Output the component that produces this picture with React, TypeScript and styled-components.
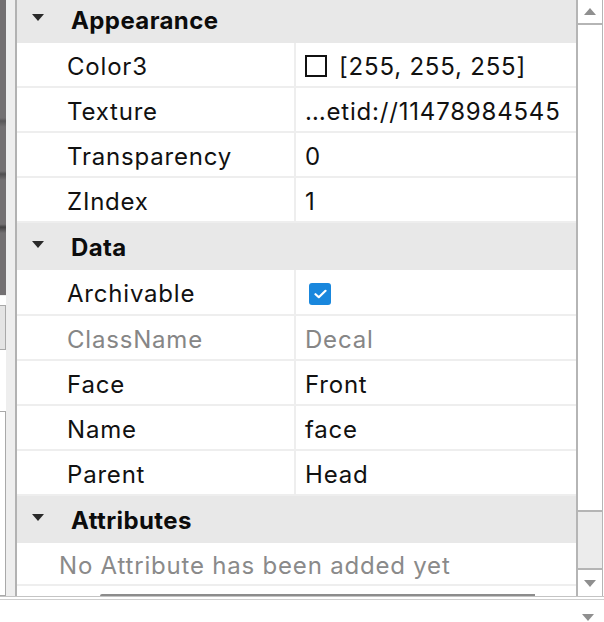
import React from 'react'
import styled, { createGlobalStyle } from 'styled-components'

const GlobalStyle = createGlobalStyle`
  html, body {
    margin: 0;
    padding: 0;
    background: #ffffff;
  }
  body {
    font-family: Inter, "Liberation Sans", "Noto Sans", sans-serif;
    color: #111111;
  }
`

const Screen = styled.div`
  width: 604px;
  height: 622px;
  display: flex;
  flex-direction: column;
  overflow: hidden;
  background: #ffffff;
`

const Main = styled.div`
  height: 596px;
  display: flex;
  flex-direction: row;
`

const DockStrip = styled.div`
  width: 15px;
  display: flex;
  flex-direction: row;
  background: #eeeeee;
  border-right: 2px solid #b2b2b2;
`

const DockColumn = styled.div`
  width: 6px;
  display: flex;
  flex-direction: column;
  background: #ffffff;
`

const Viewport = styled.div`
  height: 295px;
  background:
    linear-gradient(180deg, transparent 0 40%, rgba(40, 40, 40, 0.35) 41%, transparent 43% 58%, rgba(30, 30, 30, 0.4) 59%, transparent 61% 76%, rgba(20, 20, 20, 0.5) 77%, transparent 79%),
    #737072;
  border-bottom: 1px solid #eeeeee;
`

const DockBox = styled.div<{ $height: number; $fill?: boolean }>`
  height: ${p => p.$height}px;
  box-sizing: border-box;
  background: ${p => (p.$fill ? '#e4e4e4' : '#ffffff')};
  border: 1px solid #a9a9a9;
  border-left: none;
`

const DockGap = styled.div<{ $height: number }>`
  height: ${p => p.$height}px;
  background: #ffffff;
`

const Panel = styled.div`
  flex: 1;
  display: flex;
  flex-direction: row;
  min-width: 0;
`

const Content = styled.div`
  flex: 1;
  display: flex;
  flex-direction: column;
  overflow: hidden;
  min-width: 0;
`

const List = styled.div`
  flex: 1;
  margin-top: -4px;
  letter-spacing: 0.8px;
`

const SectionHeader = styled.div`
  height: 47px;
  box-sizing: border-box;
  padding: 2px 0 0 15px;
  display: flex;
  align-items: center;
  background: #e8e8e8;
  font-size: 24px;
  font-weight: 700;
  letter-spacing: 0.4px;
  color: #0c0c0c;
`

const Caret = styled.span`
  width: 0;
  height: 0;
  border-left: 6px solid transparent;
  border-right: 6px solid transparent;
  border-top: 7px solid #2a2a2a;
  margin-right: 27px;
  margin-bottom: 7px;
`

const Row = styled.div<{ $tall?: boolean }>`
  height: ${p => (p.$tall ? 44 : 43)}px;
  display: grid;
  grid-template-columns: 279px 1fr;
  border-bottom: 2px solid #eeeeee;
  font-size: 24px;
`

const NameCell = styled.div<{ $muted?: boolean }>`
  display: flex;
  align-items: center;
  padding: 3px 0 0 50px;
  border-right: 2px solid #eeeeee;
  color: ${p => (p.$muted ? '#868686' : '#111111')};
  white-space: nowrap;
`

const ValueCell = styled.div<{ $muted?: boolean }>`
  display: flex;
  align-items: center;
  padding: 3px 0 0 9px;
  color: ${p => (p.$muted ? '#868686' : '#111111')};
  white-space: nowrap;
  overflow: hidden;
`

const Swatch = styled.span`
  width: 22px;
  height: 22px;
  box-sizing: border-box;
  border: 2px solid #111111;
  background: #ffffff;
  margin-right: 12px;
`

const CheckBox = styled.span`
  width: 22px;
  height: 22px;
  margin-left: 4px;
  border-radius: 3px;
  background: #1987dd;
  display: flex;
  align-items: center;
  justify-content: center;
`

const EmptyRow = styled.div`
  height: 43px;
  box-sizing: border-box;
  padding: 3px 0 0 42px;
  display: flex;
  align-items: center;
  font-size: 24px;
  color: #8a8a8a;
  border-bottom: 2px solid #eeeeee;
`

const HScroll = styled.div`
  height: 9px;
  display: flex;
  align-items: flex-end;
  padding-left: 83px;
  padding-right: 41px;
`

const HThumb = styled.div`
  flex: 1;
  height: 2px;
  border-radius: 2px 0 0 0;
  background: #8c8c8c;
`

const ScrollBar = styled.div`
  width: 24px;
  display: flex;
  flex-direction: column;
  border-left: 2px solid #b5b5b5;
  border-right: 1px solid #b5b5b5;
  margin-right: 1px;
`

const ArrowBox = styled.div<{ $height: number }>`
  height: ${p => p.$height}px;
  display: flex;
  align-items: center;
  justify-content: center;
  background: #ffffff;
`

const Arrow = styled.span<{ $up?: boolean }>`
  width: 0;
  height: 0;
  border-left: 6px solid transparent;
  border-right: 6px solid transparent;
  ${p => (p.$up ? 'border-bottom: 7px solid #8f8f8f;' : 'border-top: 7px solid #8f8f8f;')}
`

const Track = styled.div`
  flex: 1;
  background: #ffffff;
  border-top: 2px solid #b5b5b5;
`

const Thumb = styled.div`
  height: 56px;
  background: #ececec;
  border-top: 2px solid #b5b5b5;
  border-bottom: 2px solid #b5b5b5;
`

const Footer = styled.div`
  flex: 1;
  display: flex;
  flex-direction: column;
  border-top: 1px solid #c4c4c4;
`

const FooterLine = styled.div`
  margin-top: 2px;
  height: 1px;
  background: #cfcfcf;
`

const FooterBody = styled.div`
  flex: 1;
  display: flex;
  justify-content: flex-end;
  align-items: flex-end;
  padding: 0 10px 1px 0;
`

type Prop = {
  name: string
  value?: string
  kind?: 'color' | 'check'
  muted?: boolean
}

type Section = {
  title: string
  rows: Prop[]
  empty?: string
}

const sections: Section[] = [
  {
    title: 'Appearance',
    rows: [
      { name: 'Color3', value: '[255, 255, 255]', kind: 'color' },
      { name: 'Texture', value: '…etid://11478984545' },
      { name: 'Transparency', value: '0' },
      { name: 'ZIndex', value: '1' },
    ],
  },
  {
    title: 'Data',
    rows: [
      { name: 'Archivable', kind: 'check' },
      { name: 'ClassName', value: 'Decal', muted: true },
      { name: 'Face', value: 'Front' },
      { name: 'Name', value: 'face' },
      { name: 'Parent', value: 'Head' },
    ],
  },
  {
    title: 'Attributes',
    rows: [],
    empty: 'No Attribute has been added yet',
  },
]

const PropertyRow: React.FC<{ prop: Prop }> = ({ prop }) => (
  <Row $tall={prop.kind === 'check'}>
    <NameCell $muted={prop.muted}>{prop.name}</NameCell>
    <ValueCell $muted={prop.muted}>
      {prop.kind === 'color' && <Swatch />}
      {prop.kind === 'check' ? (
        <CheckBox>
          <svg width="13" height="10" viewBox="0 0 13 10">
            <path d="M1.5 5.2 L4.8 8.2 L11.5 1.8" fill="none" stroke="#ffffff" strokeWidth="2.2" strokeLinecap="round" strokeLinejoin="round" />
          </svg>
        </CheckBox>
      ) : (
        prop.value
      )}
    </ValueCell>
  </Row>
)

export default function App() {
  return (
    <Screen>
      <GlobalStyle />
      <Main>
        <DockStrip>
          <DockColumn>
            <Viewport />
            <DockGap $height={10} />
            <DockBox $height={45} $fill />
            <DockGap $height={61} />
            <DockBox $height={185} />
          </DockColumn>
        </DockStrip>
        <Panel>
          <Content>
            <List>
              {sections.map(section => (
                <React.Fragment key={section.title}>
                  <SectionHeader>
                    <Caret />
                    {section.title}
                  </SectionHeader>
                  {section.rows.map(prop => (
                    <PropertyRow key={prop.name} prop={prop} />
                  ))}
                  {section.empty && <EmptyRow>{section.empty}</EmptyRow>}
                </React.Fragment>
              ))}
            </List>
            <HScroll>
              <HThumb />
            </HScroll>
          </Content>
          <ScrollBar>
            <ArrowBox $height={23}>
              <Arrow $up />
            </ArrowBox>
            <Track />
            <Thumb />
            <ArrowBox $height={26}>
              <Arrow />
            </ArrowBox>
          </ScrollBar>
        </Panel>
      </Main>
      <Footer>
        <FooterLine />
        <FooterBody>
          <Arrow />
        </FooterBody>
      </Footer>
    </Screen>
  )
}
